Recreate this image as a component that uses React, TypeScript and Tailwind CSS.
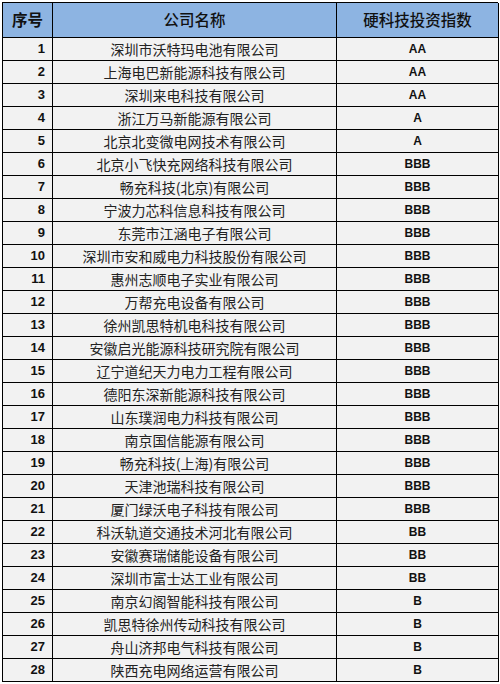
const rows: [string, string][] = [
  ["深圳市沃特玛电池有限公司", "AA"],
  ["上海电巴新能源科技有限公司", "AA"],
  ["深圳来电科技有限公司", "AA"],
  ["浙江万马新能源有限公司", "A"],
  ["北京北变微电网技术有限公司", "A"],
  ["北京小飞快充网络科技有限公司", "BBB"],
  ["畅充科技(北京)有限公司", "BBB"],
  ["宁波力芯科信息科技有限公司", "BBB"],
  ["东莞市江涵电子有限公司", "BBB"],
  ["深圳市安和威电力科技股份有限公司", "BBB"],
  ["惠州志顺电子实业有限公司", "BBB"],
  ["万帮充电设备有限公司", "BBB"],
  ["徐州凯思特机电科技有限公司", "BBB"],
  ["安徽启光能源科技研究院有限公司", "BBB"],
  ["辽宁道纪天力电力工程有限公司", "BBB"],
  ["德阳东深新能源科技有限公司", "BBB"],
  ["山东璞润电力科技有限公司", "BBB"],
  ["南京国信能源有限公司", "BBB"],
  ["畅充科技(上海)有限公司", "BBB"],
  ["天津池瑞科技有限公司", "BBB"],
  ["厦门绿沃电子科技有限公司", "BBB"],
  ["科沃轨道交通技术河北有限公司", "BB"],
  ["安徽赛瑞储能设备有限公司", "BB"],
  ["深圳市富士达工业有限公司", "BB"],
  ["南京幻阁智能科技有限公司", "B"],
  ["凯思特徐州传动科技有限公司", "B"],
  ["舟山济邦电气科技有限公司", "B"],
  ["陕西充电网络运营有限公司", "B"],
];

const cjk = "font-['Noto_Sans_CJK_SC','Noto_Sans',sans-serif]";
const latin = "font-['Liberation_Sans','Noto_Sans_CJK_SC',sans-serif]";

export default function App() {
  return (
    <div className="w-[500px] h-[684px] bg-white pt-[2px] pl-[2px]">
      <div className="grid w-[496px] grid-cols-[50px_284px_162px] border-t border-l border-black">
        {/* header */}
        <div className={`h-[35px] bg-[#8db4e2] border-r border-b border-black flex items-center justify-center text-[15.5px] font-bold text-[#111] ${cjk}`}>
          序号
        </div>
        <div className={`h-[35px] bg-[#8db4e2] border-r border-b border-black flex items-center justify-center text-[15.5px] font-medium text-[#111] ${cjk}`}>
          公司名称
        </div>
        <div className={`h-[35px] bg-[#8db4e2] border-r border-b border-black flex items-center justify-center text-[15.5px] font-medium text-[#111] ${cjk}`}>
          硬科技投资指数
        </div>

        {rows.map(([name, rating], i) => (
          <div key={i} className="contents">
            <div className={`h-[23px] bg-[#f2f2f2] border-r border-b border-black flex items-center justify-end pr-[7px] text-[13px] font-bold text-[#111] ${latin}`}>
              {i + 1}
            </div>
            <div className={`h-[23px] bg-[#f2f2f2] border-r border-b border-black flex items-center justify-center text-[14px] text-[#222] ${cjk}`}>
              {name}
            </div>
            <div className={`h-[23px] bg-[#f2f2f2] border-r border-b border-black flex items-center justify-center text-[12px] font-bold text-[#111] ${latin}`}>
              {rating}
            </div>
          </div>
        ))}
      </div>
    </div>
  );
}
